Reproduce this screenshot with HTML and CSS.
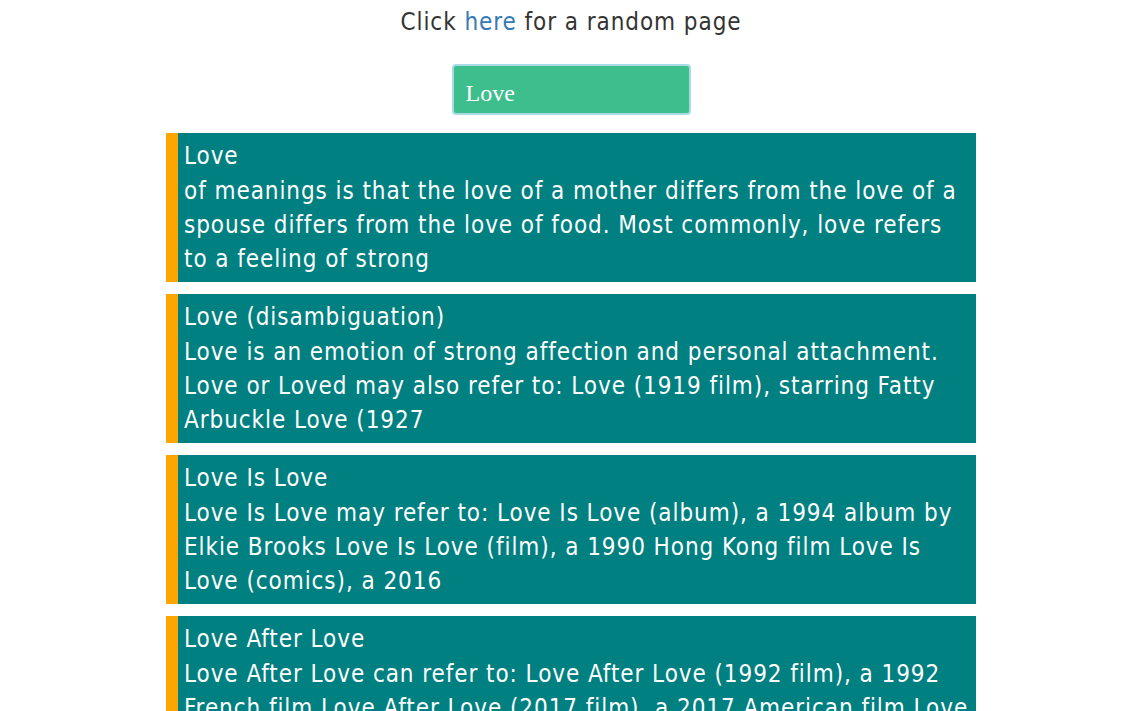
FILE: index.html
```html
<!DOCTYPE html>
<html>
<head>
<meta charset="utf-8">
<link rel="stylesheet" href="styles.css">
</head>
<body>
<div class="page">
  <p class="random">Click <a href="#">here</a> for a random page</p>
  <div class="search">
    <input class="search-input" type="text" value="Love">
  </div>
  <ul class="results">
    <li class="result">
      <div class="title">Love</div>
      <div class="snippet">of meanings is that the love of a mother differs from the love of a spouse differs from the love of food. Most commonly, love refers to a feeling of strong</div>
    </li>
    <li class="result">
      <div class="title">Love (disambiguation)</div>
      <div class="snippet">Love is an emotion of strong affection and personal attachment. Love or Loved may also refer to: Love (1919 film), starring Fatty Arbuckle Love (1927</div>
    </li>
    <li class="result">
      <div class="title">Love Is Love</div>
      <div class="snippet">Love Is Love may refer to: Love Is Love (album), a 1994 album by Elkie Brooks Love Is Love (film), a 1990 Hong Kong film Love Is Love (comics), a 2016</div>
    </li>
    <li class="result">
      <div class="title">Love After Love</div>
      <div class="snippet">Love After Love can refer to: Love After Love (1992 film), a 1992 French film Love After Love (2017 film), a 2017 American film Love After Love, a 1999</div>
    </li>
  </ul>
</div>
</body>
</html>
```
FILE: styles.css
```css
html, body {
  margin: 0;
  padding: 0;
  background: #fff;
}
body {
  font-family: "DejaVu Sans", sans-serif;
  font-stretch: condensed;
  font-size: 24px;
  line-height: 34.25px;
  letter-spacing: 0.93px;
  color: #333;
  overflow: hidden;
  height: 711px;
}
.page {
  display: flex;
  flex-direction: column;
  align-items: center;
  padding-top: 5px;
  padding-right: 1px;
}
.random {
  margin: 0;
  text-align: center;
}
.random a {
  color: #337ab7;
  text-decoration: none;
}
.search {
  margin-top: 25px;
}
.search-input {
  box-sizing: border-box;
  width: 239px;
  height: 51px;
  padding: 7px 12px 0;
  border: 2px solid #a8dbe4;
  border-radius: 4px;
  background: #3dbe8c;
  color: #fff;
  font-family: "Liberation Serif", serif;
  font-stretch: normal;
  font-size: 24px;
  letter-spacing: 0;
  outline: none;
}
.results {
  list-style: none;
  margin: 18px 0 0;
  padding: 0;
  width: 810px;
  display: flex;
  flex-direction: column;
  gap: 12px;
}
.result {
  background: #008080;
  border-left: 12px solid #ffa500;
  padding: 6px 6px;
  color: #fff;
}
```
